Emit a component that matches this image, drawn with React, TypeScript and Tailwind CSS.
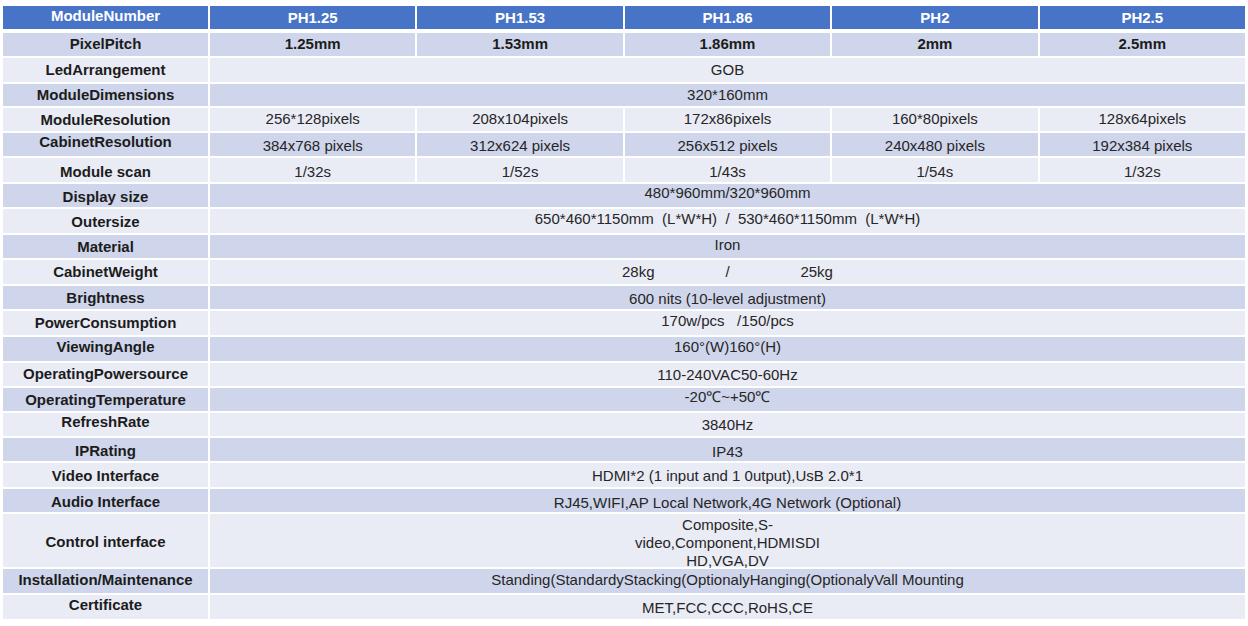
import React from "react";

interface SpecRow {
  label: string;
  values: string[]; // one value = spans all five columns
  tone: "dark" | "light";
  h: string; // cell height
  bold?: boolean;
  labelShift?: string;
  valueShift?: string;
  pre?: boolean;
}

const models = ["PH1.25", "PH1.53", "PH1.86", "PH2", "PH2.5"];

const rows: SpecRow[] = [
  { label: "PixelPitch", values: ["1.25mm", "1.53mm", "1.86mm", "2mm", "2.5mm"], tone: "dark", h: "h-[23px]", bold: true },
  { label: "LedArrangement", values: ["GOB"], tone: "light", h: "h-[24px]" },
  { label: "ModuleDimensions", values: ["320*160mm"], tone: "dark", h: "h-[22px]" },
  { label: "ModuleResolution", values: ["256*128pixels", "208x104pixels", "172x86pixels", "160*80pixels", "128x64pixels"], tone: "light", h: "h-[23px]", labelShift: "translate-y-[1px]" },
  { label: "CabinetResolution", values: ["384x768 pixels", "312x624 pixels", "256x512 pixels", "240x480 pixels", "192x384 pixels"], tone: "dark", h: "h-[23px]", labelShift: "-translate-y-[2px]", valueShift: "translate-y-[2px]" },
  { label: "Module scan", values: ["1/32s", "1/52s", "1/43s", "1/54s", "1/32s"], tone: "light", h: "h-[24px]", labelShift: "translate-y-[2px]", valueShift: "translate-y-[2px]" },
  { label: "Display size", values: ["480*960mm/320*960mm"], tone: "dark", h: "h-[23px]", labelShift: "translate-y-[2px]", valueShift: "-translate-y-[3px]" },
  { label: "Outersize", values: ["650*460*1150mm  (L*W*H)  /  530*460*1150mm  (L*W*H)"], tone: "light", h: "h-[24px]", labelShift: "translate-y-[1px]", valueShift: "-translate-y-[2px]", pre: true },
  { label: "Material", values: ["Iron"], tone: "dark", h: "h-[23px]", labelShift: "translate-y-[1px]", valueShift: "-translate-y-[2px]" },
  { label: "CabinetWeight", values: ["28kg                 /                 25kg"], tone: "light", h: "h-[24px]", pre: true },
  { label: "Brightness", values: ["600 nits (10-level adjustment)"], tone: "dark", h: "h-[23px]", labelShift: "translate-y-[1px]", valueShift: "translate-y-[1px]" },
  { label: "PowerConsumption", values: ["170w/pcs   /150/pcs"], tone: "light", h: "h-[24px]", valueShift: "-translate-y-[2px]", pre: true },
  { label: "ViewingAngle", values: ["160°(W)160°(H)"], tone: "dark", h: "h-[24px]", labelShift: "-translate-y-[2px]", valueShift: "-translate-y-[2px]" },
  { label: "OperatingPowersource", values: ["110-240VAC50-60Hz"], tone: "light", h: "h-[23px]" },
  { label: "OperatingTemperature", values: ["-20℃~+50℃"], tone: "dark", h: "h-[23px]", labelShift: "translate-y-[1px]", valueShift: "-translate-y-[3px]" },
  { label: "RefreshRate", values: ["3840Hz"], tone: "light", h: "h-[23px]", labelShift: "-translate-y-[2px]" },
  { label: "IPRating", values: ["IP43"], tone: "dark", h: "h-[23px]", labelShift: "translate-y-[2px]", valueShift: "translate-y-[2px]" },
  { label: "Video Interface", values: ["HDMI*2 (1 input and 1 0utput),UsB 2.0*1"], tone: "light", h: "h-[24px]", labelShift: "translate-y-[1px]", valueShift: "translate-y-[1px]" },
  { label: "Audio Interface", values: ["RJ45,WIFI,AP Local Network,4G Network (Optional)"], tone: "dark", h: "h-[23px]", labelShift: "translate-y-[2px]", valueShift: "translate-y-[2px]" },
  { label: "Control interface", values: ["Composite,S-\nvideo,Component,HDMISDI\nHD,VGA,DV"], tone: "light", h: "h-[53px]", labelShift: "translate-y-[2px]", valueShift: "translate-y-[2px]", pre: true },
  { label: "Installation/Maintenance", values: ["Standing(StandardyStacking(OptionalyHanging(OptionalyVall Mounting"], tone: "dark", h: "h-[24px]", labelShift: "-translate-y-[1px]", valueShift: "-translate-y-[1px]" },
  { label: "Certificate", values: ["MET,FCC,CCC,RoHS,CE"], tone: "light", h: "h-[24px]", labelShift: "-translate-y-[2px]", valueShift: "translate-y-[1px]" },
];

const toneClass = (tone: "dark" | "light") =>
  tone === "dark" ? "bg-[#cfd5ea]" : "bg-[#e9ebf5]";

const App = () => {
  return (
    <div
      className="w-[1248px] h-[626px] bg-white pt-[6px] pl-[3px] overflow-hidden"
      style={{ fontFamily: '"Liberation Sans", Arial, sans-serif' }}
    >
      <div className="w-[1242px] flex flex-col">
        {/* header row */}
        <div className="grid grid-cols-[205px_repeat(5,1fr)] gap-x-[2px]">
          <div className="h-[23px] bg-[#4874c8] flex items-center justify-center text-white font-bold text-[15px]">
            <span className="-translate-y-[1px]">ModuleNumber</span>
          </div>
          {models.map((m) => (
            <div
              key={m}
              className="h-[23px] bg-[#4874c8] flex items-center justify-center text-white font-bold text-[15px]"
            >
              <span className="translate-y-[1px]">{m}</span>
            </div>
          ))}
        </div>

        {/* spec rows */}
        <div className="mt-[4px] grid grid-cols-[205px_repeat(5,1fr)] gap-x-[2px] gap-y-[2px]">
          {rows.map((row) => (
            <React.Fragment key={row.label}>
              {/* label */}
              <div
                className={`${row.h} ${toneClass(row.tone)} flex items-center justify-center font-bold text-[15px] text-[#1c1c1c] whitespace-nowrap`}
              >
                <span className={row.labelShift}>{row.label}</span>
              </div>
              {/* values */}
              {row.values.length === 1 ? (
                <div
                  className={`${row.h} ${toneClass(row.tone)} col-span-5 flex items-center justify-center text-[15px] text-[#262626] text-center leading-[18px] ${row.pre ? "whitespace-pre" : ""}`}
                >
                  <span className={row.valueShift}>{row.values[0]}</span>
                </div>
              ) : (
                row.values.map((v, i) => (
                  <div
                    key={i}
                    className={`${row.h} ${toneClass(row.tone)} flex items-center justify-center text-[15px] ${row.bold ? "font-bold text-[#1c1c1c]" : "text-[#262626]"}`}
                  >
                    <span className={row.valueShift}>{v}</span>
                  </div>
                ))
              )}
            </React.Fragment>
          ))}
        </div>
      </div>
    </div>
  );
};

export default App;
